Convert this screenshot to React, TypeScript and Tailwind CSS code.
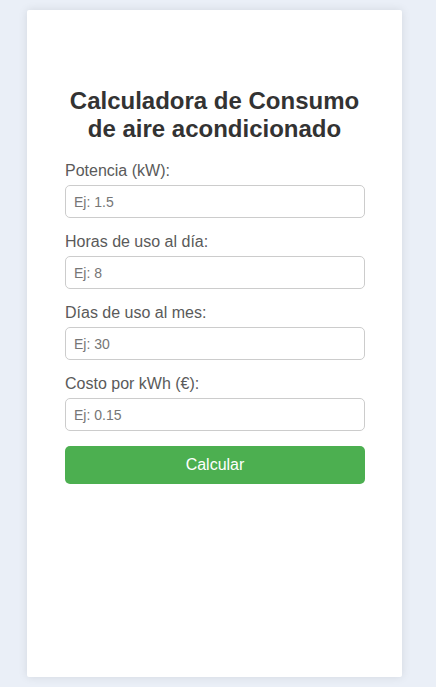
import React from "react";

const fields = [
  { label: "Potencia (kW):", ph: "Ej: 1.5" },
  { label: "Horas de uso al día:", ph: "Ej: 8" },
  { label: "Días de uso al mes:", ph: "Ej: 30" },
  { label: "Costo por kWh (€):", ph: "Ej: 0.15" },
];

export default function App() {
  return (
    <div
      className="min-h-[687px] bg-[#eaeff7] pt-[10px] pb-[10px]"
      style={{ fontFamily: '"Liberation Sans", Arial, sans-serif' }}
    >
      <div className="ml-[27px] w-[375px] h-[667px] bg-white rounded-[2px] shadow-[0_0_10px_rgba(0,0,0,0.1)] px-[38px] pt-[77px]">
        <h2 className="text-[24px] leading-[27.6px] font-bold text-[#333] text-center">
          Calculadora de Consumo
          <br />
          de aire acondicionado
        </h2>
        <div className="mt-[20px] flex flex-col">
          {fields.map((f) => (
            <div key={f.label} className="mb-[15px] flex flex-col">
              <label className="text-[16px] leading-[18px] text-[#5a5a5a]">{f.label}</label>
              <input
                type="text"
                placeholder={f.ph}
                className="mt-[5px] h-[33px] w-[300px] rounded-[5px] border border-[#ccc] px-[8px] text-[14px] text-[#333] placeholder:text-[#767676] outline-none"
              />
            </div>
          ))}
          <button className="h-[38px] w-[300px] rounded-[5px] bg-[#4caf50] text-[16px] text-white">
            Calcular
          </button>
        </div>
      </div>
    </div>
  );
}
